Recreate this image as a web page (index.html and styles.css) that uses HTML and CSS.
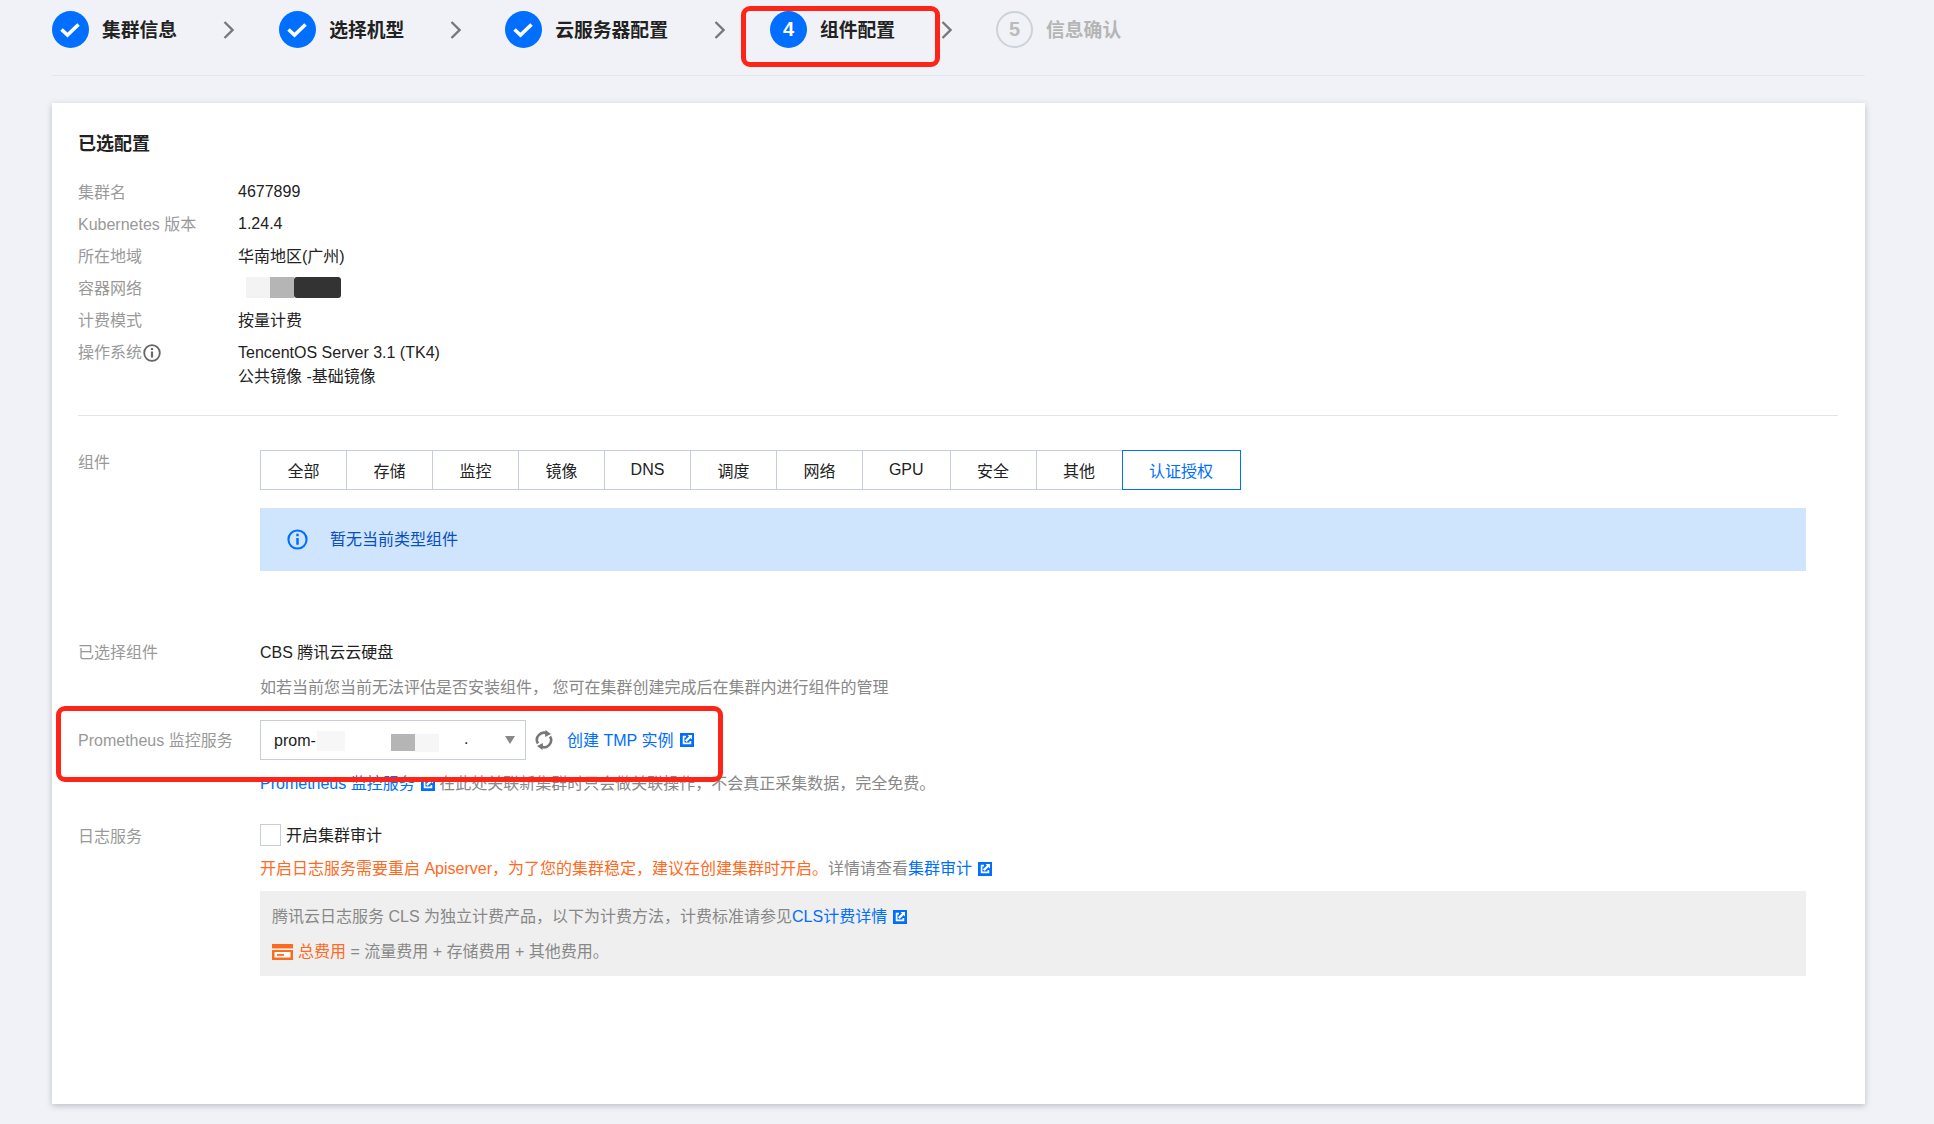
FILE: index.html
```html
<!DOCTYPE html>
<html lang="zh-CN">
<head>
<meta charset="utf-8">
<title>组件配置</title>
<link rel="stylesheet" href="styles.css">
</head>
<body>
<svg class="defs" width="0" height="0" aria-hidden="true">
  <symbol id="ext" viewBox="0 0 14 14">
    <path d="M0 0h14v14H0z" fill="#006eff"/>
    <path d="M6 3.600H3.600v6.800h6.800V8" fill="none" stroke="#fff" stroke-width="1.700"/>
    <path d="M5.800 8.200L10.500 3.500" fill="none" stroke="#fff" stroke-width="2.400"/>
    <path d="M7.500 2h4.500v4.500z" fill="#fff"/>
  </symbol>
  <symbol id="check" viewBox="0 0 37 37">
    <circle cx="18.500" cy="18.500" r="18.500" fill="#006eff"/>
    <path d="M9.500 18.500l6 5.500L26.500 13.500" fill="none" stroke="#fff" stroke-width="3.600"/>
  </symbol>
  <symbol id="chev" viewBox="0 0 11 18">
    <path d="M1.500 1l8 8-8 8" fill="none" stroke="#777" stroke-width="2.300"/>
  </symbol>
</svg>

<main class="page">
  <nav class="steps">
    <div class="step s1"><svg class="circle"><use href="#check"/></svg><span class="step-label">集群信息</span></div>
    <svg class="chev c1"><use href="#chev"/></svg>
    <div class="step s2"><svg class="circle"><use href="#check"/></svg><span class="step-label">选择机型</span></div>
    <svg class="chev c2"><use href="#chev"/></svg>
    <div class="step s3"><svg class="circle"><use href="#check"/></svg><span class="step-label">云服务器配置</span></div>
    <svg class="chev c3"><use href="#chev"/></svg>
    <div class="step s4"><span class="circle num active">4</span><span class="step-label">组件配置</span></div>
    <svg class="chev c4"><use href="#chev"/></svg>
    <div class="step s5"><span class="circle num todo">5</span><span class="step-label muted">信息确认</span></div>
  </nav>

  <section class="card">
    <h2 class="title">已选配置</h2>
    <div class="info">
      <div class="info-row"><span class="info-key">集群名</span><span class="info-val">4677899</span></div>
      <div class="info-row"><span class="info-key">Kubernetes 版本</span><span class="info-val">1.24.4</span></div>
      <div class="info-row"><span class="info-key">所在地域</span><span class="info-val cjk-val">华南地区(广州)</span></div>
      <div class="info-row"><span class="info-key">容器网络</span><span class="info-val blur-val"><i class="blob b-light"></i><i class="blob b-mid"></i><i class="blob b-dark"></i></span></div>
      <div class="info-row"><span class="info-key">计费模式</span><span class="info-val cjk-val">按量计费</span></div>
      <div class="info-row os-row">
        <span class="info-key os-key">操作系统<svg class="hint-icon" viewBox="0 0 18 18"><circle cx="9" cy="9" r="7.800" fill="none" stroke="#666" stroke-width="1.800"/><path d="M9 7.500v6M9 4v2" stroke="#666" stroke-width="2.200" fill="none"/></svg></span>
        <span class="info-val">TencentOS Server 3.1 (TK4)<br>公共镜像 -基础镜像</span>
      </div>
    </div>
    <hr class="divider">

    <div class="form">
      <div class="form-key k-comp">组件</div>
      <div class="form-val">
        <div class="segments">
          <span class="seg">全部</span><span class="seg">存储</span><span class="seg">监控</span><span class="seg">镜像</span><span class="seg">DNS</span><span class="seg">调度</span><span class="seg">网络</span><span class="seg seg-gpu">GPU</span><span class="seg">安全</span><span class="seg">其他</span><span class="seg seg-on">认证授权</span>
        </div>
        <div class="alert">
          <svg class="alert-icon" viewBox="0 0 22 22"><circle cx="11" cy="11" r="9.500" fill="none" stroke="#006eff" stroke-width="2.200"/><path d="M11 9.500v7M11 5v2.500" stroke="#006eff" stroke-width="2.600" fill="none"/></svg>
          <span class="alert-text">暂无当前类型组件</span>
        </div>
      </div>

      <div class="form-key k-sel">已选择组件</div>
      <div class="form-val k-sel">
        <div class="line">CBS 腾讯云云硬盘</div>
        <div class="line gray hint-line">如若当前您当前无法评估是否安装组件， 您可在集群创建完成后在集群内进行组件的管理</div>
      </div>

      <div class="form-key k-prom">Prometheus 监控服务</div>
      <div class="form-val k-prom">
        <div class="prom-row">
          <div class="select">
            <span class="sel-text">prom-</span>
            <i class="sel-blob sel-a"></i><i class="sel-blob sel-b"></i><i class="sel-blob sel-c"></i>
            <span class="sel-dot">.</span>
            <i class="caret"></i>
          </div>
          <svg class="refresh" viewBox="0 0 18 20"><path d="M3 13.500A7 7 0 0 1 12.500 3.800M15 6.500A7 7 0 0 1 5.500 16.200" fill="none" stroke="#777" stroke-width="2.600"/><path d="M10.500 0l5.500 4-6 3zM7.500 20L2 16l6-3z" fill="#777"/></svg>
          <a class="link prom-link">创建 TMP 实例</a><svg class="ext ext-prom"><use href="#ext"/></svg>
        </div>
        <div class="line gray help-line"><a class="link">Prometheus 监控服务</a><svg class="ext ext-help"><use href="#ext"/></svg> 在此处关联新集群时只会做关联操作，不会真正采集数据，完全免费。</div>
      </div>

      <div class="form-key k-log">日志服务</div>
      <div class="form-val k-log">
        <label class="check"><i class="box"></i><span class="check-text">开启集群审计</span></label>
        <div class="line orange warn-line">开启日志服务需要重启 Apiserver，为了您的集群稳定，建议在创建集群时开启。<span class="gray">详情请查看</span><a class="link">集群审计</a><svg class="ext ext-warn"><use href="#ext"/></svg></div>
        <div class="note">
          <div class="line gray">腾讯云日志服务 CLS 为独立计费产品，以下为计费方法，计费标准请参见<a class="link">CLS计费详情</a><svg class="ext ext-warn"><use href="#ext"/></svg></div>
          <div class="line gray cost-line"><svg class="cost-icon" viewBox="0 0 21 16"><path d="M0 0h21v16H0z" fill="#ff6a1f"/><path d="M0 4.500h21v1.500H0z" fill="#fff"/><path d="M2.500 8h16v5.500h-16z" fill="#fff"/><path d="M5 10h7v1.800H5z" fill="#ff6a1f"/></svg><span class="orange">总费用</span> = 流量费用 + 存储费用 + 其他费用。</div>
        </div>
      </div>
    </div>
  </section>
</main>

<div class="redbox red-step"></div>
<div class="redbox red-prom"></div>
</body>
</html>
```
FILE: styles.css
```css
* { box-sizing: border-box; }
html, body { margin: 0; padding: 0; }
body {
  width: 1934px;
  height: 1124px;
  overflow: hidden;
  position: relative;
  background: #f0f2f7;
  color: #222;
  font-family: "Liberation Sans", "Noto Sans CJK SC", sans-serif;
  font-size: 16px;
}
.defs { position: absolute; }
.page { padding: 0 69px 0 52px; }

.steps {
  display: flex;
  align-items: center;
  height: 76px;
  padding-bottom: 16px;
  border-bottom: 1px solid #e4e7ee;
}
.step { display: flex; align-items: center; gap: 13px; }
.circle { width: 37px; height: 37px; flex: none; }
.num {
  display: flex;
  align-items: center;
  justify-content: center;
  border-radius: 50%;
  font-size: 20px;
  font-weight: 700;
}
.active { background: #006eff; color: #fff; }
.todo { border: 2px solid #ccd1da; color: #bbb; }
.step-label { font-size: 18.800px; font-weight: 700; color: #222; white-space: nowrap; padding-bottom: 2px; }
.muted { color: #b5b5b5; }
.chev { width: 11px; height: 18px; flex: none; }
.c1 { margin: 0 45px 0 46px; }
.c2 { margin: 0 44px 0 46px; }
.c3 { margin: 0 45px 0 46px; }
.c4 { margin: 0 44px 0 46px; }

.card {
  margin-top: 27px;
  height: 1001px;
  padding: 29px 27px 0 26px;
  background: #fff;
  box-shadow: 0 2px 6px rgba(54, 58, 80, .28);
}
.title { margin: 0 0 20px; font-size: 18px; line-height: 24px; font-weight: 700; color: #222; }

.info-row { display: flex; height: 32px; align-items: center; }
.info-key { width: 160px; flex: none; color: #999; display: flex; align-items: center; padding-bottom: 2px; }
.info-val { color: #222; }
.cjk-val { padding-bottom: 2px; }
.hint-icon { width: 18px; height: 18px; margin-left: 1px; }
.os-row { height: auto; align-items: flex-start; padding-top: 5px; line-height: 24px; }
.blur-val { display: flex; height: 21px; padding-left: 8px; margin-top: -2px; }
.blob { display: block; height: 21px; }
.b-light { width: 24px; background: #f3f3f3; }
.b-mid { width: 24px; background: #b5b5b5; }
.b-dark { width: 47px; background: #333; border-radius: 3px; }

.divider { height: 1px; margin: 26px 0 34px; border: 0; background: #e5e5e5; }

.form { display: grid; grid-template-columns: 182px 1fr; }
.form-val { padding-right: 32px; }
.form-key { color: #999; line-height: 24px; }
.k-comp { line-height: 26px; }
.k-sel { margin-top: 70px; }
.k-prom { margin-top: 20px; }
.k-log { margin-top: 28px; }
.form-key.k-prom { line-height: 42px; }
.form-key.k-log { line-height: 26px; }

.line { line-height: 24px; white-space: nowrap; }
.gray { color: #888; }
.orange { color: #ff6a1f; }
.link { color: #006eff; }
.hint-line { margin-top: 11px; }
.help-line { margin-top: 12px; }
.warn-line { margin-top: 11px; }

.segments { display: flex; height: 40px; }
.seg {
  min-width: 87px;
  margin-right: -1px;
  padding-bottom: 1px;
  display: flex;
  align-items: center;
  justify-content: center;
  border: 1px solid #c8ced9;
  color: #222;
  white-space: nowrap;
}
.seg-gpu { min-width: 88.500px; padding-bottom: 0; }
.seg-on { position: relative; min-width: 119px; border-color: #006eff; color: #006eff; }

.alert {
  display: flex;
  align-items: center;
  height: 63px;
  margin-top: 18px;
  padding-left: 27px;
  gap: 22px;
  background: #cfe4fd;
  color: #0a4fc0;
}
.alert-text { padding-bottom: 3px; }
.alert-icon { width: 21px; height: 21px; flex: none; }

.prom-row { display: flex; align-items: center; height: 40px; }
.select {
  position: relative;
  width: 266px;
  height: 40px;
  padding-left: 13px;
  display: flex;
  align-items: center;
  border: 1px solid #c8ced9;
  color: #222;
}
.sel-text { padding-top: 1px; }
.sel-blob { position: absolute; display: block; }
.sel-a { left: 56px; top: 10px; width: 28px; height: 20px; background: #f7f7f7; }
.sel-b { left: 130px; top: 13px; width: 24px; height: 17px; background: #b5b5b5; }
.sel-c { left: 154px; top: 13px; width: 24px; height: 18px; background: #f6f6f6; }
.sel-dot { position: absolute; left: 203px; top: 9px; }
.caret {
  position: absolute;
  right: 10px;
  top: 15px;
  width: 0;
  height: 0;
  border-left: 5.500px solid transparent;
  border-right: 5.500px solid transparent;
  border-top: 8px solid #888;
}
.refresh { width: 18px; height: 20px; margin: 0 14px 0 9px; flex: none; }
.prom-link { padding-bottom: 2px; }
.ext { display: inline-block; width: 14px; height: 14px; vertical-align: -2px; }
.ext-prom { margin-left: 7px; }
.ext-help { margin-left: 6px; }
.ext-warn { margin-left: 6px; }

.check { display: flex; align-items: center; height: 22px; gap: 5px; color: #222; }
.check-text { padding-bottom: 2px; }
.box { width: 21px; height: 22px; border: 1px solid #c8ced9; display: block; flex: none; }

.note {
  height: 85px;
  margin-top: 10px;
  padding: 14px 12px 0;
  background: #efefef;
}
.cost-line { display: flex; align-items: center; margin-top: 11px; white-space: pre; }
.cost-icon { width: 21px; height: 16px; margin-right: 5px; flex: none; }

.redbox {
  position: absolute;
  border: 5px solid #ff2418;
  border-radius: 9px;
}
.red-step { left: 741px; top: 6px; width: 199px; height: 61px; }
.red-prom { left: 56px; top: 706px; width: 667px; height: 76px; }
```
